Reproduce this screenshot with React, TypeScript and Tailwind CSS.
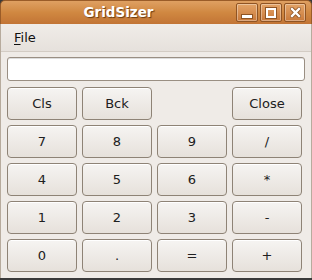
import React from 'react'

const keys = [
  ['Cls', 'Bck', '', 'Close'],
  ['7', '8', '9', '/'],
  ['4', '5', '6', '*'],
  ['1', '2', '3', '-'],
  ['0', '.', '=', '+'],
]

function TitleButton({ kind }: { kind: 'min' | 'max' | 'close' }) {
  return (
    <div className="flex h-[19px] w-[22px] items-center justify-center rounded-[2px] border border-[#8f5424] bg-gradient-to-b from-[#e3a467] to-[#c9793a] shadow-[inset_0_0_0_1px_rgba(255,255,255,0.35)]">
      {kind === 'min' && <div className="mt-[7px] h-[3px] w-[10px] bg-white shadow-[0_0_0_1px_#8f5424]" />}
      {kind === 'max' && (
        <div className="h-[10px] w-[10px] border-2 border-white shadow-[0_0_0_1px_#8f5424]" />
      )}
      {kind === 'close' && (
        <svg width="11" height="11" viewBox="0 0 11 11">
          <path d="M2 2 L9 9 M9 2 L2 9" stroke="#8f5424" strokeWidth="4" strokeLinecap="square" />
          <path d="M2 2 L9 9 M9 2 L2 9" stroke="#fff" strokeWidth="2.4" strokeLinecap="square" />
        </svg>
      )}
    </div>
  )
}

export default function App() {
  return (
    <div className="flex h-[280px] w-[312px] flex-col bg-[#3a3a3a] font-['DejaVu_Sans',sans-serif] text-[13px] text-[#101010]">
      {/* title bar */}
      <div className="relative flex h-[24px] shrink-0 items-center rounded-t-[5px] border border-b-0 border-[#9a5c28] bg-gradient-to-b from-[#dfa062] via-[#d08841] to-[#c27435]">
        <div className="flex-1 text-center text-[13.5px] font-bold text-white [text-shadow:1px_1px_1px_#6b3b12]">
          GridSizer
        </div>
        <div className="flex gap-[2px] pr-[5px]">
          <TitleButton kind="min" />
          <TitleButton kind="max" />
          <TitleButton kind="close" />
        </div>
      </div>

      {/* window body */}
      <div className="mb-[2px] flex flex-1 flex-col border-x border-[#b7ab9d] bg-[#efebe7]">
        <div className="flex h-[28px] shrink-0 items-center border-b border-[#d3ccc4] bg-gradient-to-b from-[#f0ece8] to-[#e6e1dc] px-[13px]">
          <span>
            <span className="underline underline-offset-2">F</span>ile
          </span>
        </div>

        <div className="flex flex-1 flex-col px-[6px] pt-[5px]">
          <input
            className="h-[24px] w-full rounded-[3px] border border-[#9a8f83] bg-white px-[4px] shadow-[inset_0_1px_0_#ddd] outline-none"
            defaultValue=""
          />
          <div className="mt-[6px] grid grid-cols-4 gap-[5px] pr-[3px]">
            {keys.flat().map((k, i) =>
              k === '' ? (
                <div key={i} />
              ) : (
                <button
                  key={i}
                  className="flex h-[33px] items-center justify-center rounded-[4px] border border-[#8e8376] bg-gradient-to-b from-[#f6f4f2] to-[#e6e1db] text-[#202020] shadow-[inset_0_1px_0_#fff]"
                >
                  {k}
                </button>
              ),
            )}
          </div>
        </div>
      </div>
    </div>
  )
}
